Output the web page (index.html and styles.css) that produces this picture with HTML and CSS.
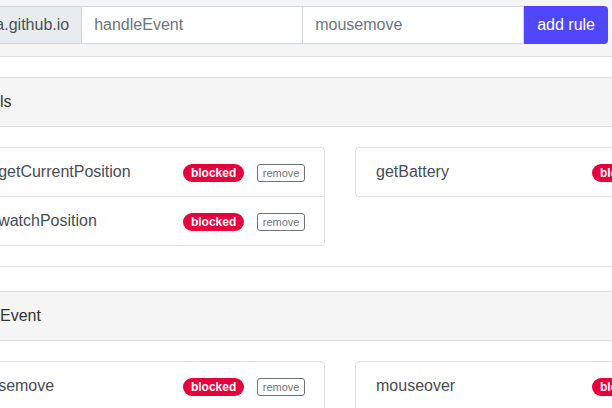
FILE: index.html
```html
<!DOCTYPE html>
<html lang="en">
<head>
<meta charset="utf-8">
<title>Rules</title>
<link rel="stylesheet" href="styles.css">
</head>
<body>
<div class="bar">
  <form class="rule-form">
    <span class="addon">pagedata.github.io</span>
    <input class="field" type="text" value="handleEvent">
    <input class="field" type="text" value="mousemove">
    <button class="add" type="button">add rule</button>
  </form>
</div>
<main class="main">
  <section class="group">
    <h2 class="group-title">Controls</h2>
    <div class="cards">
      <div class="card">
        <div class="row"><span class="name">geo.getCurrentPosition</span><span class="actions"><span class="badge">blocked</span><button class="remove" type="button">remove</button></span></div>
        <div class="row"><span class="name">geo.watchPosition</span><span class="actions"><span class="badge">blocked</span><button class="remove" type="button">remove</button></span></div>
      </div>
      <div class="card">
        <div class="row"><span class="name">getBattery</span><span class="actions"><span class="badge">blocked</span><button class="remove" type="button">remove</button></span></div>
      </div>
    </div>
  </section>
  <section class="group">
    <h2 class="group-title">handleEvent</h2>
    <div class="cards">
      <div class="card">
        <div class="row"><span class="name">mousemove</span><span class="actions"><span class="badge">blocked</span><button class="remove" type="button">remove</button></span></div>
        <div class="row"><span class="name">mousedown</span><span class="actions"><span class="badge">blocked</span><button class="remove" type="button">remove</button></span></div>
      </div>
      <div class="card">
        <div class="row"><span class="name">mouseover</span><span class="actions"><span class="badge">blocked</span><button class="remove" type="button">remove</button></span></div>
      </div>
    </div>
  </section>
</main>
</body>
</html>
```
FILE: styles.css
```css
html, body {
  margin: 0;
  padding: 0;
  overflow: hidden;
  background: #fff;
  font-family: "Liberation Sans", Arial, sans-serif;
  font-size: 16px;
  color: #333;
}

.bar {
  display: flex;
  justify-content: flex-end;
  padding: 6px 4px 12px 0;
  background: #f5f5f5;
  border-bottom: 1px solid #ddd;
}

.rule-form {
  display: flex;
  flex-shrink: 0;
  margin: 0;
  height: 38px;
}

.addon {
  flex-shrink: 0;
  display: flex;
  align-items: center;
  padding: 0 12px;
  background: #e9ecef;
  border: 1px solid #ced4da;
  border-radius: 4px 0 0 4px;
  color: #495057;
  white-space: nowrap;
  box-sizing: border-box;
  height: 38px;
}

.field {
  flex-shrink: 0;
  width: 221px;
  height: 38px;
  box-sizing: border-box;
  margin: 0;
  padding: 0 12px;
  border: 1px solid #ced4da;
  border-left: 0;
  background: #fff;
  font-family: "Liberation Sans", Arial, sans-serif;
  font-size: 16px;
  color: #6c757d;
  outline: none;
}

.add {
  flex-shrink: 0;
  height: 38px;
  margin: 0;
  padding: 0 13px;
  border: 0;
  border-radius: 0 4px 4px 0;
  background: #5046fc;
  color: #fff;
  font-family: "Liberation Sans", Arial, sans-serif;
  font-size: 16px;
}

.main {
  margin-left: -54px;
  padding-top: 20px;
  display: flex;
  flex-direction: column;
  gap: 24px;
}

.group {
  border-bottom: 1px solid #ddd;
}

.group-title {
  margin: 0;
  height: 48px;
  display: flex;
  align-items: center;
  padding: 0 6px;
  background: #f5f5f5;
  border-top: 1px solid #ddd;
  border-bottom: 1px solid #ddd;
  font-size: 16px;
  font-weight: normal;
  color: #333;
  white-space: nowrap;
}

.cards {
  display: grid;
  grid-template-columns: 379px 379px;
  column-gap: 30px;
  align-items: start;
  padding: 20px 0;
}

.card {
  border: 1px solid #ddd;
  border-radius: 4px;
  background: #fff;
}

.row {
  height: 48px;
  display: flex;
  align-items: center;
  justify-content: space-between;
  padding: 0 19px 0 20px;
}

.row + .row {
  border-top: 1px solid #ddd;
}

.name {
  color: #474c55;
  white-space: nowrap;
}

.actions {
  display: flex;
  align-items: center;
  gap: 13px;
  padding-top: 2px;
}

.badge {
  display: inline-block;
  height: 18px;
  line-height: 18px;
  padding: 0 8px;
  border-radius: 9px;
  background: #e6003c;
  color: #fff;
  font-size: 12px;
  font-weight: bold;
}

.remove {
  height: 18px;
  margin: 0;
  padding: 0 4.5px;
  border: 1px solid #6c757d;
  border-radius: 3px;
  background: #fff;
  color: #6c757d;
  font-family: "Liberation Sans", Arial, sans-serif;
  font-size: 11px;
  line-height: 16px;
}
```
